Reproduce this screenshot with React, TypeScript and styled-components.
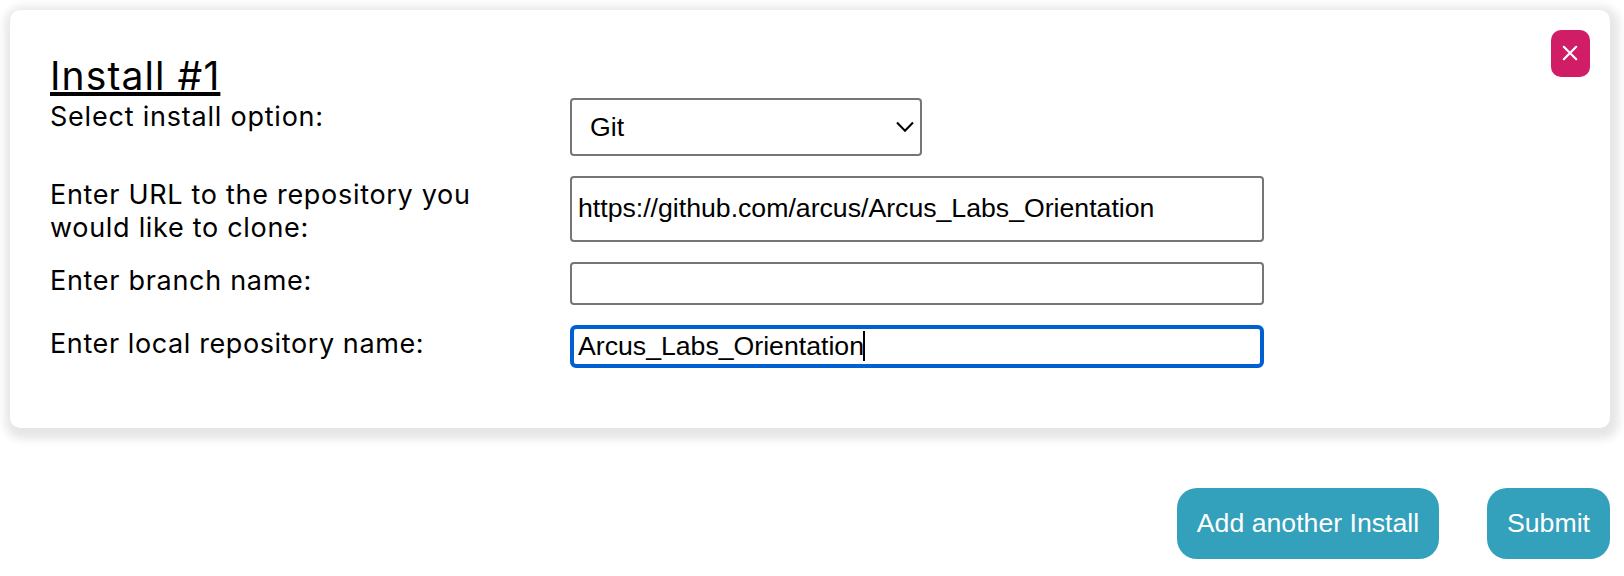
import React, { useState } from 'react';
import styled, { createGlobalStyle } from 'styled-components';

const GlobalStyle = createGlobalStyle`
  * { box-sizing: border-box; }
  body {
    margin: 0;
    background: #fff;
    color: #000;
    font-family: Inter, Roboto, sans-serif;
  }
`;

const Page = styled.main`
  display: flex;
  flex-direction: column;
  gap: 60px;
  height: 576px;
  padding: 10px 14px 0 10px;
  overflow: hidden;
`;

const Card = styled.section`
  position: relative;
  height: 418px;
  padding: 44px 40px 60px;
  border-radius: 10px;
  background: #fff;
  box-shadow: 2px 4px 10px 7px rgba(0, 0, 0, 0.1);
`;

const Title = styled.h2`
  margin: 0;
  font-size: 39px;
  font-weight: 400;
  line-height: 44px;
  letter-spacing: 1.1px;
  text-decoration: underline;
  text-decoration-thickness: 4px;
  text-underline-offset: 2px;
  text-decoration-skip-ink: none;
`;

const Form = styled.div`
  display: grid;
  gap: 20px;
`;

const Row = styled.div`
  display: grid;
  grid-template-columns: 520px 694px;
  align-items: start;
`;

const Label = styled.label<{ $tracking?: number }>`
  width: 440px;
  margin-bottom: -2px;
  padding-top: 2px;
  font-size: 27px;
  line-height: 33px;
  letter-spacing: ${({ $tracking = 0.7 }) => $tracking}px;
`;

const SelectBox = styled.button`
  display: flex;
  align-items: center;
  justify-content: space-between;
  width: 352px;
  height: 58px;
  padding: 0 6px 0 18px;
  border: 2px solid #767676;
  border-radius: 4px;
  background: #fff;
  color: #000;
  font: 26.667px/30px 'Liberation Sans', Arial, sans-serif;
`;

const Field = styled.div<{ $height: number; $focused?: boolean; $lift?: number }>`
  display: flex;
  align-items: center;
  height: ${({ $height }) => $height}px;
  padding: 0 4px ${({ $lift = 0 }) => $lift}px ${({ $focused }) => ($focused ? 4 : 6)}px;
  border: ${({ $focused }) => ($focused ? '4px solid #0060d2' : '2px solid #767676')};
  border-radius: ${({ $focused }) => ($focused ? 6 : 4)}px;
  background: #fff;
  font: 26.667px/30px 'Liberation Sans', Arial, sans-serif;
`;

const Caret = styled.span`
  width: 2px;
  height: 30px;
  margin-left: -1px;
  background: #000;
`;

const CloseButton = styled.button`
  position: absolute;
  top: 20px;
  right: 20px;
  display: flex;
  align-items: center;
  justify-content: center;
  width: 39px;
  height: 47px;
  padding: 0 1px 1px 0;
  border: 0;
  border-radius: 10px;
  background: #d11c66;
`;

const Actions = styled.footer`
  display: flex;
  justify-content: flex-end;
  gap: 48px;
`;

const ActionButton = styled.button<{ $width: number }>`
  width: ${({ $width }) => $width}px;
  height: 71px;
  padding: 0 0 2px;
  border: 0;
  border-radius: 20px;
  background: #33a0bc;
  color: #fff;
  font: 26.667px/30px 'Liberation Sans', Arial, sans-serif;
  white-space: nowrap;
`;

export default function App() {
  const [open, setOpen] = useState(true);
  return (
    <>
      <GlobalStyle />
      <Page>
        {open && (
          <Card>
            <Title>Install #1</Title>
            <Form>
              <Row>
                <Label $tracking={0.78}>Select install option:</Label>
                <SelectBox type="button">
                  Git
                  <svg width="18" height="12" viewBox="0 0 18 12" fill="none">
                    <path d="M1 1.5 L9 9.8 L17 1.5" stroke="#000" strokeWidth="2" />
                  </svg>
                </SelectBox>
              </Row>
              <Row>
                <Label>Enter URL to the repository you would like to clone:</Label>
                <Field $height={66} $lift={2}>https://github.com/arcus/Arcus_Labs_Orientation</Field>
              </Row>
              <Row>
                <Label>Enter branch name:</Label>
                <Field $height={43} />
              </Row>
              <Row>
                <Label $tracking={0.6}>Enter local repository name:</Label>
                <Field $height={43} $focused $lift={2}>
                  Arcus_Labs_Orientation
                  <Caret />
                </Field>
              </Row>
            </Form>
            <CloseButton type="button" aria-label="Remove install" onClick={() => setOpen(false)}>
              <svg width="16" height="16" viewBox="0 0 16 16" fill="none">
                <path d="M1.8 1.8 L14.2 14.2 M14.2 1.8 L1.8 14.2" stroke="#fff" strokeWidth="2.2" strokeLinecap="round" />
              </svg>
            </CloseButton>
          </Card>
        )}
        <Actions>
          <ActionButton type="button" $width={262}>Add another Install</ActionButton>
          <ActionButton type="button" $width={123}>Submit</ActionButton>
        </Actions>
      </Page>
    </>
  );
}
